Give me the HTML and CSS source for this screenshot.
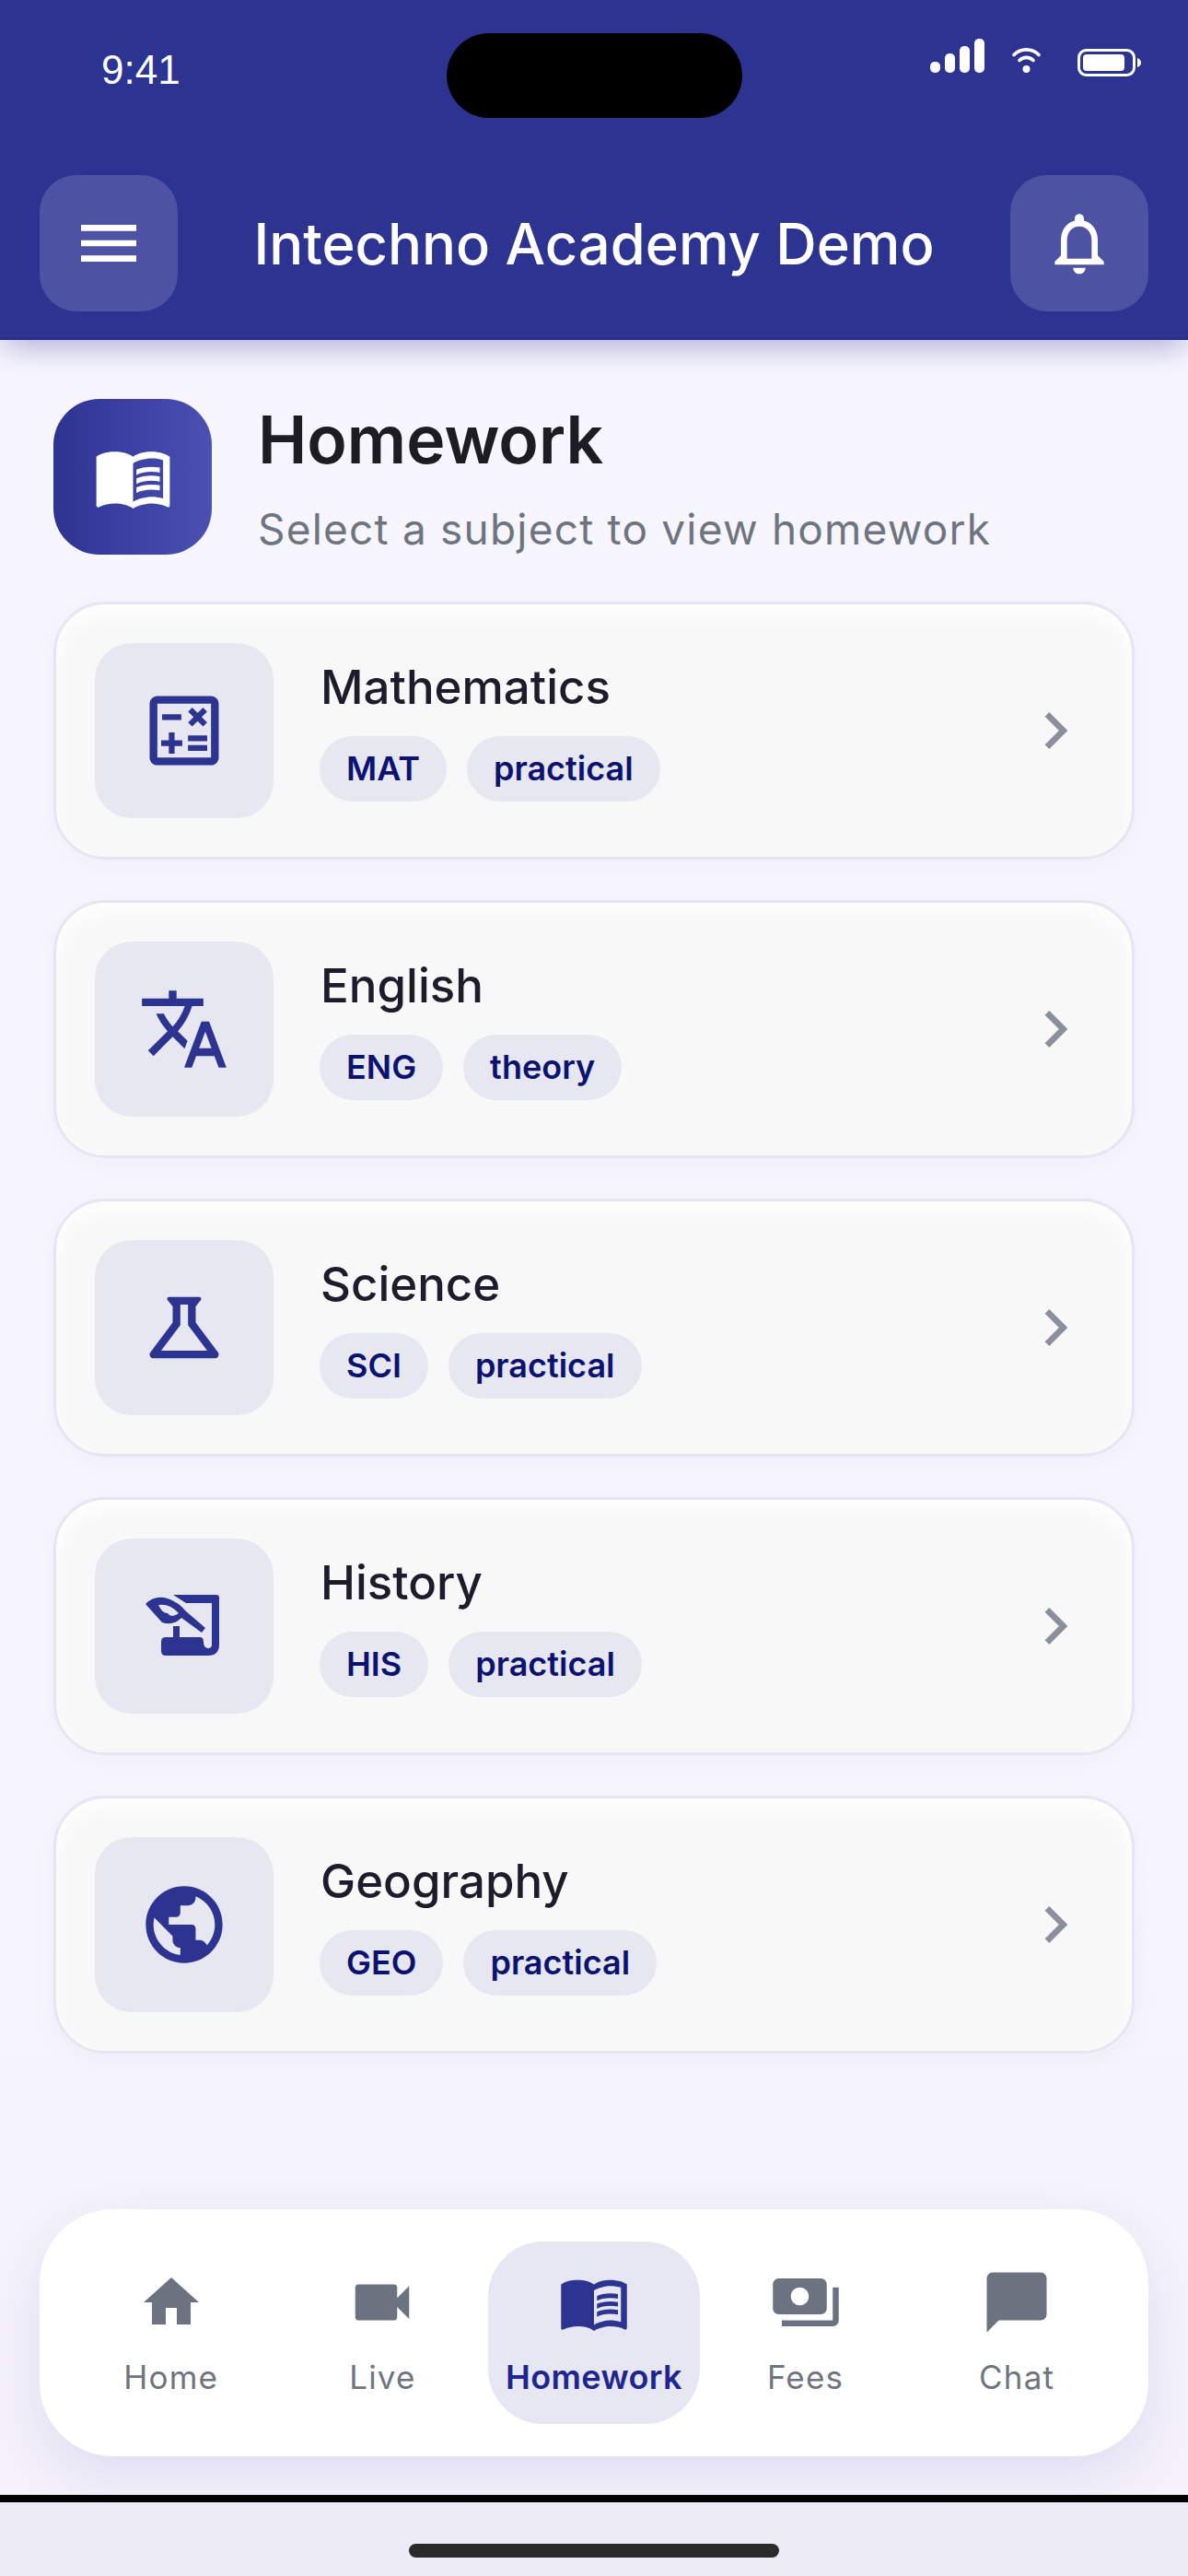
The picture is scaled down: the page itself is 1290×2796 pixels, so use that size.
FILE: index.html
```html
<!DOCTYPE html>
<html lang="en">
<head>
    <meta charset="UTF-8">
    <meta name="viewport" content="width=device-width, initial-scale=1.0">
    <title>Homework</title>
    <link rel="stylesheet" href="styles.css">
</head>
<body>
    <svg class="defs" aria-hidden="true">
        <symbol id="book" viewBox="0 0 24 24">
            <path d="M21 5c-1.11-.35-2.33-.5-3.5-.5-1.95 0-4.05.4-5.5 1.5-1.45-1.1-3.55-1.5-5.5-1.5S2.45 4.9 1 6v14.65c0 .25.25.5.5.5.1 0 .15-.05.25-.05C3.1 20.45 5.05 20 6.5 20c1.95 0 4.05.4 5.5 1.5 1.35-.85 3.8-1.5 5.5-1.5 1.65 0 3.35.3 4.75 1.05.1.05.15.05.25.05.25 0 .5-.25.5-.5V6c-.6-.45-1.25-.75-2-1zm0 13.5c-1.1-.35-2.3-.5-3.5-.5-1.7 0-4.15.65-5.5 1.5V8c1.35-.85 3.8-1.5 5.5-1.5 1.2 0 2.4.15 3.5.5v11.5z"/>
            <path d="M17.5 10.5c.88 0 1.73.09 2.5.26V9.24c-.79-.15-1.64-.24-2.5-.24-1.7 0-3.24.29-4.5.83v1.66c1.13-.64 2.7-.99 4.5-.99zM13 12.49v1.66c1.13-.64 2.7-.99 4.5-.99.88 0 1.73.09 2.5.26V11.9c-.79-.15-1.64-.24-2.5-.24-1.7 0-3.24.3-4.5.83zM17.5 14.33c-1.7 0-3.24.29-4.5.83v1.66c1.13-.64 2.7-.99 4.5-.99.88 0 1.73.09 2.5.26v-1.52c-.79-.16-1.64-.24-2.5-.24z"/>
        </symbol>
        <symbol id="chevron" viewBox="0 0 24 24">
            <path d="M10 6L8.59 7.41 13.17 12l-4.58 4.59L10 18l6-6z"/>
        </symbol>
    </svg>

    <div class="phone">
        <header class="header">
            <div class="status-bar">
                <span class="time">9:41</span>
                <span class="island"></span>
                <div class="status-icons">
                    <svg class="signal" viewBox="0 0 59 37">
                        <rect x="0" y="25" width="11" height="12" rx="5"/>
                        <rect x="16" y="16" width="11" height="21" rx="5"/>
                        <rect x="32" y="8" width="11" height="29" rx="5"/>
                        <rect x="48" y="0" width="11" height="37" rx="5"/>
                    </svg>
                    <svg class="wifi" viewBox="0 0 31 27">
                        <circle cx="15.5" cy="23" r="4"/>
                        <path d="M8 13.5a10.5 10.5 0 0 1 15 0M2 7.5a19 19 0 0 1 27 0" fill="none" stroke="#fff" stroke-width="3.6" stroke-linecap="round"/>
                    </svg>
                    <svg class="battery" viewBox="0 0 69 30">
                        <rect x="1.5" y="1.5" width="60" height="27" rx="8" fill="none" stroke="#fff" stroke-width="3"/>
                        <rect x="6" y="6" width="45" height="18" rx="4"/>
                        <path d="M65 10c3 1 4 3 4 5s-1 4-4 5z"/>
                    </svg>
                </div>
            </div>
            <div class="app-bar">
                <button class="app-btn" type="button">
                    <svg class="app-icon" viewBox="0 0 24 24"><path d="M3 18h18v-2H3v2zm0-5h18v-2H3v2zm0-7v2h18V6H3z"/></svg>
                </button>
                <h1 class="app-title">Intechno Academy Demo</h1>
                <button class="app-btn" type="button">
                    <svg class="app-icon" viewBox="0 0 24 24"><path d="M12 22c1.1 0 2-.9 2-2h-4c0 1.1.9 2 2 2zm6-6v-5c0-3.07-1.63-5.64-4.5-6.32V4c0-.83-.67-1.5-1.5-1.5s-1.5.67-1.5 1.5v.68C7.64 5.36 6 7.92 6 11v5l-2 2v1h16v-1l-2-2zm-2 1H8v-6c0-2.48 1.51-4.5 4-4.5s4 2.02 4 4.5v6z"/></svg>
                </button>
            </div>
        </header>

        <main class="content">
            <div class="page-head">
                <div class="page-icon">
                    <svg class="page-book"><use href="#book"/></svg>
                </div>
                <div class="page-text">
                    <h2 class="page-title">Homework</h2>
                    <p class="page-sub">Select a subject to view homework</p>
                </div>
            </div>

            <div class="subject-list">
                <div class="subject">
                    <div class="subject-icon">
                        <svg viewBox="0 0 24 24"><path d="M19 3H5c-1.1 0-2 .9-2 2v14c0 1.1.9 2 2 2h14c1.1 0 2-.9 2-2V5c0-1.1-.9-2-2-2zm0 16H5V5h14v14z"/><path d="M6.25 7.72h5v1.5h-5zM13 15.75h5v1.5h-5zM13 13.25h5v1.5h-5zM8 18h1.5v-2h2v-1.5h-2v-2H8v2H6V16h2zM14.09 10.95l1.41-1.41 1.41 1.41 1.06-1.06-1.41-1.42 1.41-1.41L16.91 6 15.5 7.41 14.09 6l-1.06 1.06 1.41 1.41-1.41 1.42z"/></svg>
                    </div>
                    <div class="subject-body">
                        <h3 class="subject-name">Mathematics</h3>
                        <div class="chips"><span class="chip">MAT</span><span class="chip">practical</span></div>
                    </div>
                    <svg class="chevron"><use href="#chevron"/></svg>
                </div>

                <div class="subject">
                    <div class="subject-icon">
                        <svg viewBox="0 0 24 24"><path d="M12.87 15.07l-2.54-2.51.03-.03c1.74-1.94 2.98-4.17 3.71-6.53H17V4h-7V2H8v2H1v1.99h11.17C11.5 7.92 10.44 9.75 9 11.35 8.07 10.32 7.3 9.19 6.69 8h-2c.73 1.63 1.73 3.17 2.98 4.56l-5.09 5.02L4 19l5-5 3.11 3.11.76-2.04zM18.5 10h-2L12 22h2l1.12-3h4.75L21 22h2l-4.5-12zm-2.62 7l1.62-4.33L19.12 17h-3.24z"/></svg>
                    </div>
                    <div class="subject-body">
                        <h3 class="subject-name">English</h3>
                        <div class="chips"><span class="chip">ENG</span><span class="chip">theory</span></div>
                    </div>
                    <svg class="chevron"><use href="#chevron"/></svg>
                </div>

                <div class="subject">
                    <div class="subject-icon">
                        <svg viewBox="0 0 24 24"><path d="M13 11.33L18 18H6l5-6.67V6h2v5.33zM15.96 4H8.04c-.42 0-.65.48-.39.81L9 6.5v4.17L3.2 18.4c-.49.66-.02 1.6.8 1.6h16c.82 0 1.29-.94.8-1.6L15 10.67V6.5l1.35-1.69c.26-.33.03-.81-.39-.81z"/></svg>
                    </div>
                    <div class="subject-body">
                        <h3 class="subject-name">Science</h3>
                        <div class="chips"><span class="chip">SCI</span><span class="chip">practical</span></div>
                    </div>
                    <svg class="chevron"><use href="#chevron"/></svg>
                </div>

                <div class="subject">
                    <div class="subject-icon">
                        <svg viewBox="0 0 100 100">
                            <path d="M38 16H85Q88 16 88 19V70Q88 82 76 82H30Q25 82 25 77V67Q25 62 30 62H38V50H45V62H67Q71 62 71 67Q71 74 76 74Q80 74 80 70V25H52Z"/>
                            <path d="M8 26Q18 16 32 20Q44 24 52 34L73 52L69 57L47 41Q38 50 26 46Z"/>
                            <path class="quill-cut" d="M22 27Q34 25 44 36Q36 42 32 36Q26 36 22 27Z"/>
                        </svg>
                    </div>
                    <div class="subject-body">
                        <h3 class="subject-name">History</h3>
                        <div class="chips"><span class="chip">HIS</span><span class="chip">practical</span></div>
                    </div>
                    <svg class="chevron"><use href="#chevron"/></svg>
                </div>

                <div class="subject">
                    <div class="subject-icon">
                        <svg viewBox="0 0 24 24"><path d="M12 2C6.48 2 2 6.48 2 12s4.48 10 10 10 10-4.48 10-10S17.52 2 12 2zM4 12c0-.61.08-1.21.21-1.78L8.99 15v1c0 1.1.9 2 2 2v1.93C7.06 19.43 4 16.07 4 12zm13.89 5.4c-.26-.81-1-1.4-1.9-1.4h-1v-3c0-.55-.45-1-1-1h-6v-2h2c.55 0 1-.45 1-1V7h2c1.1 0 2-.9 2-2v-.41C17.92 5.77 20 8.65 20 12c0 2.08-.81 3.98-2.11 5.4z"/></svg>
                    </div>
                    <div class="subject-body">
                        <h3 class="subject-name">Geography</h3>
                        <div class="chips"><span class="chip">GEO</span><span class="chip">practical</span></div>
                    </div>
                    <svg class="chevron"><use href="#chevron"/></svg>
                </div>
            </div>
        </main>

        <nav class="tabbar">
            <a class="tab">
                <svg class="tab-icon tab-home" viewBox="0 0 24 24"><path d="M10 20v-6h4v6h5v-8h3L12 3 2 12h3v8z"/></svg>
                <span class="tab-label">Home</span>
            </a>
            <a class="tab">
                <svg class="tab-icon" viewBox="0 0 24 24"><path d="M17 10.5V7c0-.55-.45-1-1-1H4c-.55 0-1 .45-1 1v10c0 .55.45 1 1 1h12c.55 0 1-.45 1-1v-3.5l4 4v-11l-4 4z"/></svg>
                <span class="tab-label">Live</span>
            </a>
            <a class="tab tab-active">
                <svg class="tab-icon"><use href="#book"/></svg>
                <span class="tab-label">Homework</span>
            </a>
            <a class="tab">
                <svg class="tab-icon" viewBox="0 0 24 24"><path d="M19 14V6c0-1.1-.9-2-2-2H3c-1.1 0-2 .9-2 2v8c0 1.1.9 2 2 2h14c1.1 0 2-.9 2-2zm-9-1c-1.66 0-3-1.34-3-3s1.34-3 3-3 3 1.34 3 3-1.34 3-3 3zm13-6v11c0 1.1-.9 2-2 2H4v-2h17V7h2z"/></svg>
                <span class="tab-label">Fees</span>
            </a>
            <a class="tab">
                <svg class="tab-icon" viewBox="0 0 24 24"><path d="M20 2H4c-1.1 0-2 .9-2 2v18l4-4h14c1.1 0 2-.9 2-2V4c0-1.1-.9-2-2-2z"/></svg>
                <span class="tab-label">Chat</span>
            </a>
        </nav>

        <div class="screen-end"></div>
        <div class="home-area"><span class="home-bar"></span></div>
    </div>
</body>
</html>
```

FILE: styles.css
```css
* {
    box-sizing: border-box;
}
body {
    margin: 0;
    font-family: Inter, "Noto Sans", sans-serif;
    background-color: #f7f5fd;
}
h1, h2, h3, p {
    margin: 0;
}
.defs {
    display: none;
}
.phone {
    display: flex;
    flex-direction: column;
    height: 2796px;
    overflow: hidden;
    background: linear-gradient(#f7f5fd, #f7f5fd 70%, #f4f1fb);
}

/* top bar */
.header {
    position: relative;
    z-index: 1;
    height: 369px;
    background-color: #2c3391;
    border-bottom: 2px solid #272d8a;
    box-shadow: 0 12px 30px -4px rgba(44, 51, 145, 0.35);
}
.status-bar {
    display: grid;
    grid-template-columns: 485px 321px 1fr;
    height: 154px;
    padding-top: 36px;
}
.time {
    padding: 14px 0 0 110px;
    font-family: "Liberation Sans", Arial, sans-serif;
    font-size: 44px;
    line-height: 52px;
    color: #fff;
}
.island {
    height: 92px;
    border-radius: 46px;
    background-color: #000;
}
.status-icons {
    display: flex;
    align-items: flex-end;
    height: 47px;
    padding-left: 204px;
    fill: #fff;
}
.signal {
    width: 59px;
    height: 37px;
    margin-bottom: 4px;
}
.wifi {
    width: 31px;
    height: 27px;
    margin: 0 40px 4px 30px;
}
.battery {
    width: 69px;
    height: 30px;
}
.app-bar {
    display: flex;
    align-items: center;
    justify-content: space-between;
    padding: 36px 43px 0;
}
.app-btn {
    display: flex;
    align-items: center;
    justify-content: center;
    width: 150px;
    height: 148px;
    padding: 0;
    border: 0;
    border-radius: 40px;
    background-color: rgba(255, 255, 255, 0.16);
}
.app-icon {
    width: 80px;
    height: 80px;
    fill: #fff;
}
.app-title {
    font-size: 61.5px;
    font-weight: 500;
    color: #fff;
}

/* page */
.content {
    flex: 1;
    padding: 64px 58px 0;
}
.page-head {
    display: flex;
    align-items: center;
    gap: 50px;
    margin: 0 0 51px;
}
.page-icon {
    display: flex;
    align-items: center;
    justify-content: center;
    width: 172px;
    height: 169px;
    border-radius: 50px;
    background: linear-gradient(90deg, #2c3391, #4b51b3);
}
.page-book {
    width: 87px;
    height: 87px;
    fill: #fff;
}
.page-title {
    font-size: 71.5px;
    font-weight: 600;
    line-height: 86px;
    margin-top: 1px;
    color: #1c1c22;
}
.page-sub {
    margin-top: 26px;
    font-size: 46px;
    line-height: 56px;
    letter-spacing: 1.2px;
    color: #6f7580;
}
.subject-list {
    display: flex;
    flex-direction: column;
    gap: 44px;
}
.subject {
    display: flex;
    align-items: center;
    height: 280px;
    padding: 0 43px 0 42px;
    border: 3px solid #e6e6f2;
    border-radius: 56px;
    background-color: #f8f8f9;
    box-shadow: inset 0 10px 20px rgba(255, 255, 255, 0.9), 0 6px 30px rgba(44, 51, 145, 0.04);
}
.subject-icon {
    display: flex;
    align-items: center;
    justify-content: center;
    flex-shrink: 0;
    width: 194px;
    height: 190px;
    border-radius: 40px;
    background-color: #e6e7f0;
}
.subject-icon svg {
    width: 100px;
    height: 100px;
    fill: #2c3391;
}
.quill-cut {
    fill: #e6e7f0;
}
.subject-body {
    flex: 1;
    padding-left: 51px;
}
.subject-name {
    font-size: 51px;
    font-weight: 500;
    line-height: 62px;
    margin-top: -2px;
    color: #1c1c2a;
}
.chips {
    display: flex;
    gap: 22px;
    margin-top: 22px;
    margin-left: -1px;
}
.chip {
    height: 71px;
    padding: 0 29px;
    border-radius: 36px;
    font-size: 36px;
    font-weight: 600;
    line-height: 71px;
    color: #0c1270;
    background-color: #e6e7f0;
}
.chevron {
    width: 80px;
    height: 80px;
    fill: #8b8f9b;
}

/* bottom tabs */
.tabbar {
    display: flex;
    align-items: center;
    height: 268px;
    margin: 0 43px 41px;
    padding: 0 28px;
    border-radius: 80px;
    background-color: #fff;
    box-shadow: 0 20px 60px rgba(44, 51, 145, 0.1);
}
.tab {
    display: flex;
    flex: 1;
    flex-direction: column;
    align-items: center;
    height: 198px;
    padding-top: 27px;
    border-radius: 60px;
    color: #6f7580;
    fill: #6b7280;
}
.tab-icon {
    width: 78px;
    height: 78px;
}
.tab-home {
    width: 72px;
}
.tab-label {
    margin-top: 22px;
    font-size: 35px;
    line-height: 40px;
    letter-spacing: 1.2px;
}
.tab-active {
    color: #1f2590;
    fill: #2c3391;
    background-color: #e6e7f2;
}
.tab-active .tab-label {
    font-size: 36px;
    font-weight: 600;
    letter-spacing: 0.4px;
}
.screen-end {
    height: 9px;
    border-top: 1px solid #e8e8ee;
    background-color: #000;
}
.home-area {
    display: flex;
    justify-content: center;
    height: 80px;
    padding-top: 45px;
    background-color: #ecebf6;
}
.home-bar {
    width: 402px;
    height: 15px;
    border-radius: 8px;
    background-color: #2a2a2a;
}
```
